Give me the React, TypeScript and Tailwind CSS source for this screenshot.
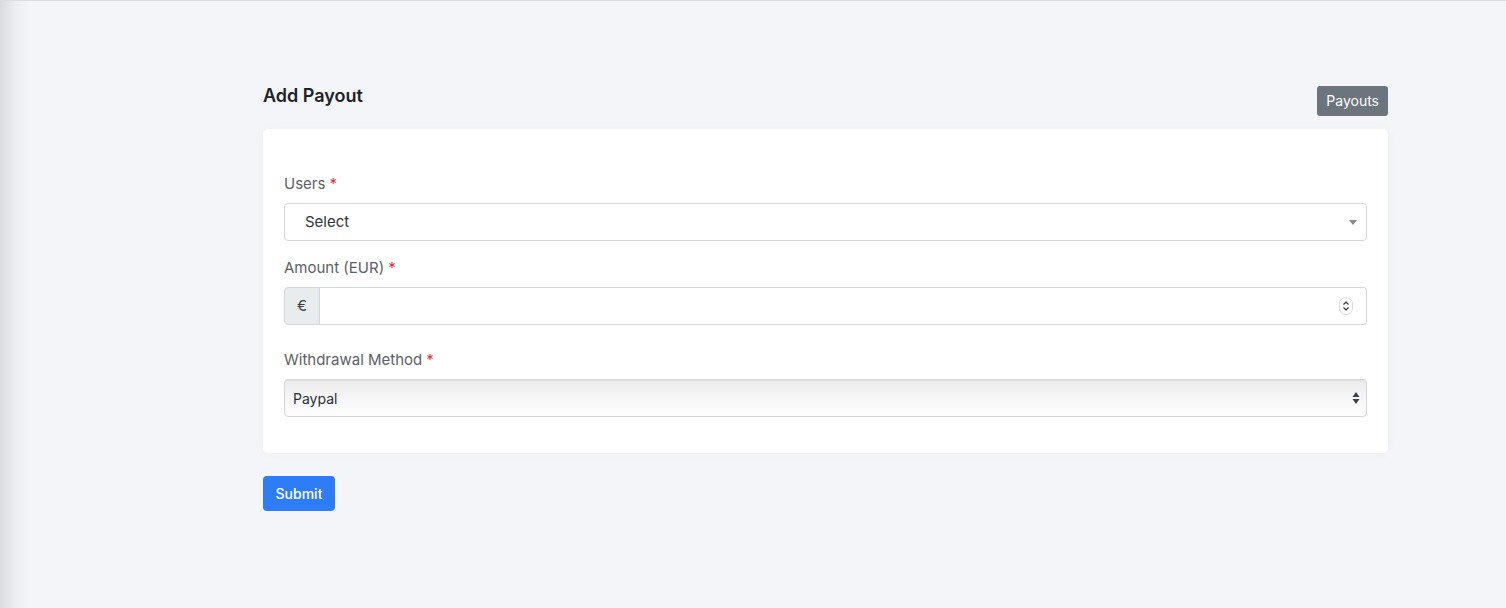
import React from "react";

function Star() {
  return <span className="text-[#e0303b] ml-[4px]">*</span>;
}

export default function App() {
  return (
    <div
      className="relative w-full h-[608px] bg-[#f4f5f8] border-t border-[#dcdde1] overflow-hidden"
      style={{ fontFamily: "Inter, 'Noto Sans', sans-serif" }}
    >
      <div className="absolute left-0 top-0 bottom-0 w-[30px] bg-gradient-to-r from-[#d9dadc] via-[#eceef1] to-[#f4f5f8]" />
      <div className="relative ml-[263px] w-[1125px] pt-[82px]">
        <div className="flex justify-between items-start mb-[13px]">
          <h1 className="-mt-[1px] text-[18px] leading-[27px] font-semibold text-[#1f2226]">Add Payout</h1>
          <button className="mt-[3px] h-[30px] px-[9px] rounded-[3px] bg-[#6c757d] text-white text-[14px] leading-none">
            Payouts
          </button>
        </div>
        <div className="bg-white rounded-[5px] shadow-[0_0_12px_rgba(0,0,0,0.03)] px-[21px] pt-[44px] pb-[36px]">
          <label className="block text-[15px] leading-[21px] text-[#5d6065] mb-[9px]">
            Users<Star />
          </label>
          <div className="flex items-center h-[38px] border border-[#d3d6da] rounded-[4px] pl-[20px] pr-[8px]">
            <span className="flex-1 text-[15px] text-[#2f3338]">Select</span>
            <svg width="8" height="5" viewBox="0 0 8 5" className="mr-[1px]">
              <path d="M0 0h8L4 5z" fill="#8a8a8a" />
            </svg>
          </div>
          <label className="block text-[15px] leading-[21px] text-[#5d6065] mt-[16px] mb-[9px]">
            Amount (EUR)<Star />
          </label>
          <div className="flex h-[38px]">
            <div className="w-[36px] flex items-center justify-center bg-[#e9ecef] border border-[#d3d6da] rounded-l-[4px] text-[15px] text-[#3a3e43]">
              €
            </div>
            <div className="flex-1 flex items-center justify-end border border-l-0 border-[#d3d6da] rounded-r-[4px] pr-[13px]">
              <svg width="14" height="18" viewBox="0 0 14 18">
                <rect x="0.5" y="0.5" width="13" height="17" rx="6.5" fill="#fff" stroke="#d8d8d8" />
                <path d="M4.5 7.5L7 5l2.5 2.5M4.5 10.5L7 13l2.5-2.5" fill="none" stroke="#333" strokeWidth="1.2" />
              </svg>
            </div>
          </div>
          <label className="block text-[15px] leading-[21px] text-[#5d6065] mt-[24px] mb-[9px]">
            Withdrawal Method<Star />
          </label>
          <div className="flex items-center h-[38px] border border-[#d2d5d9] rounded-[4px] pl-[8px] pr-[6px] bg-gradient-to-b from-[#ebebeb] via-[#f6f6f6] to-[#fdfdfd] shadow-[inset_0_1px_1px_rgba(0,0,0,0.05)]">
            <span className="flex-1 text-[14px] text-[#2b2e33]">Paypal</span>
            <svg width="8" height="14" viewBox="0 0 8 14">
              <path d="M4 1L7.5 6H0.5z M4 13L0.5 8h7z" fill="#3c3f44" />
            </svg>
          </div>
        </div>
        <button className="mt-[23px] h-[35px] w-[72px] rounded-[4px] bg-[#2e7cf6] text-white text-[14px] font-medium">
          Submit
        </button>
      </div>
    </div>
  );
}
